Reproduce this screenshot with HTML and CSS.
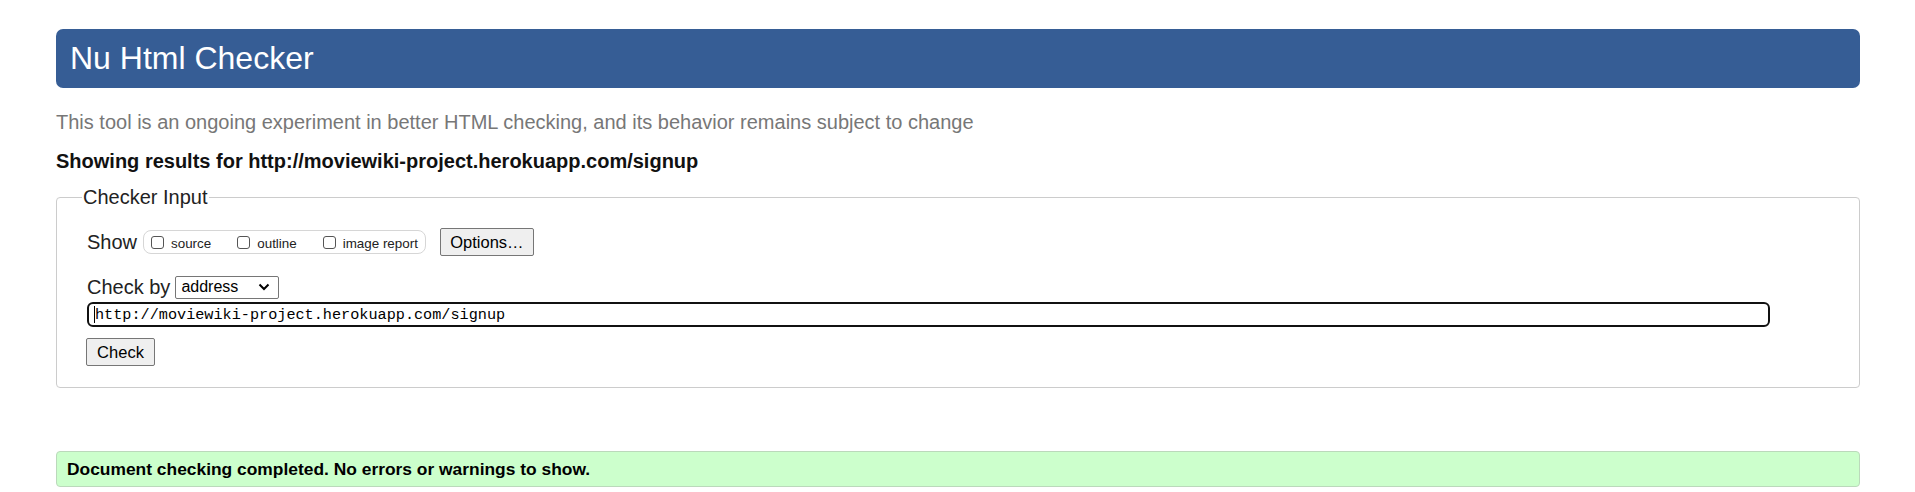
FILE: index.html
```html
<!DOCTYPE html>
<html lang="en">
<head>
<meta charset="utf-8">
<title>Nu Html Checker</title>
<link rel="stylesheet" href="styles.css">
</head>
<body>
<h1 class="title">Nu Html Checker</h1>
<p class="intro">This tool is an ongoing experiment in better HTML checking, and its behavior remains subject to change</p>
<p class="target">Showing results for http://moviewiki-project.herokuapp.com/signup</p>
<form class="form">
  <fieldset class="box">
    <legend class="legend">Checker Input</legend>
    <div class="row row-show">
      <span class="label">Show</span>
      <span class="group">
        <label class="opt"><input class="cb" type="checkbox"><span>source</span></label>
        <label class="opt"><input class="cb" type="checkbox"><span>outline</span></label>
        <label class="opt"><input class="cb" type="checkbox"><span>image report</span></label>
      </span>
      <button class="btn btn-options" type="button">Options…</button>
    </div>
    <div class="row row-by">
      <span class="label">Check by</span>
      <span class="select"><span>address</span><svg class="chev" width="12" height="8" viewBox="0 0 12 8"><path d="M1.5 1.5 L6 6 L10.5 1.5" fill="none" stroke="#000" stroke-width="2"/></svg></span>
    </div>
    <div class="url"><span class="caret"></span><span class="url-text">http://moviewiki-project.herokuapp.com/signup</span></div>
    <div class="row row-check">
      <button class="btn btn-check" type="button">Check</button>
    </div>
  </fieldset>
</form>
<div class="success">Document checking completed. No errors or warnings to show.</div>
</body>
</html>
```
FILE: styles.css
```css
html, body {
  margin: 0;
  padding: 0;
  background: #fff;
}
body {
  padding: 0 55px 0 56px;
  font-family: "Liberation Sans", Arial, sans-serif;
  color: #000;
}
.title {
  margin: 29px 0 0;
  height: 59px;
  line-height: 59px;
  padding: 0 14px;
  font-size: 32px;
  font-weight: normal;
  color: #fff;
  background: #365d95;
  border-radius: 7px;
}
.intro {
  margin: 23px 0 0;
  font-size: 20px;
  line-height: 23px;
  color: #777;
}
.target {
  margin: 16px 0 0;
  font-size: 20px;
  line-height: 23px;
  font-weight: bold;
  color: #111;
}
.form {
  margin: 13px 0 0;
}
.box {
  margin: 0;
  padding: 0 30px 21px 30px;
  border: 1px solid #ccc;
  border-radius: 4px;
  font-size: 20px;
}
.legend {
  padding: 0 1px;
  margin-left: -5px;
  font-size: 20px;
  line-height: 23px;
  color: #222;
}
.row {
  display: flex;
  align-items: center;
}
.row-show {
  margin-top: 18px;
  height: 30px;
}
.label {
  font-size: 20px;
  line-height: 23px;
  color: #222;
}
.group {
  display: flex;
  align-items: flex-end;
  gap: 26px;
  height: 22px;
  margin-left: 6px;
  padding: 0 7px 0 7px;
  border: 1px solid #d6d6d6;
  border-radius: 8px;
}
.opt {
  display: flex;
  align-items: flex-end;
  gap: 7px;
  font-size: 13.4px;
  line-height: 16px;
  color: #222;
  padding-bottom: 1px;
}
.cb {
  appearance: none;
  -webkit-appearance: none;
  margin: 0 0 3px;
  width: 13px;
  height: 13px;
  border: 1px solid #555;
  border-radius: 3px;
  background: #fff;
  box-sizing: border-box;
}
.btn {
  font-family: "Liberation Sans", Arial, sans-serif;
  font-size: 16.5px;
  color: #000;
  background: #efefef;
  border: 1px solid #767676;
  border-radius: 2px;
  padding: 0 8px;
  height: 28px;
  line-height: 26px;
}
.btn-options {
  margin-left: 14px;
  width: 94px;
}
.row-by {
  margin-top: 18px;
  height: 24px;
}
.select {
  display: flex;
  align-items: center;
  justify-content: space-between;
  margin-left: 5px;
  width: 104px;
  height: 23px;
  box-sizing: border-box;
  padding: 0 8px 0 5px;
  border: 1px solid #767676;
  border-radius: 2px;
  font-size: 16px;
  color: #000;
}
.chev {
  display: block;
}
.url {
  display: flex;
  align-items: center;
  margin-top: 3px;
  width: 1683px;
  height: 25px;
  box-sizing: border-box;
  border: 2px solid #111;
  border-radius: 6px;
  padding-left: 5px;
}
.caret {
  width: 1px;
  height: 17px;
  background: #000;
}
.url-text {
  font-family: "Liberation Mono", "Courier New", monospace;
  font-size: 15.2px;
  color: #000;
}
.row-check {
  margin-top: 11px;
}
.btn-check {
  margin-left: -1px;
  width: 69px;
  height: 28px;
}
.success {
  margin-top: 63px;
  height: 36px;
  line-height: 34px;
  box-sizing: border-box;
  padding: 0 10px;
  background: #ccffcc;
  border: 1px solid #bbd9bb;
  border-radius: 4px;
  font-size: 17.4px;
  font-weight: bold;
  color: #000;
}
```
